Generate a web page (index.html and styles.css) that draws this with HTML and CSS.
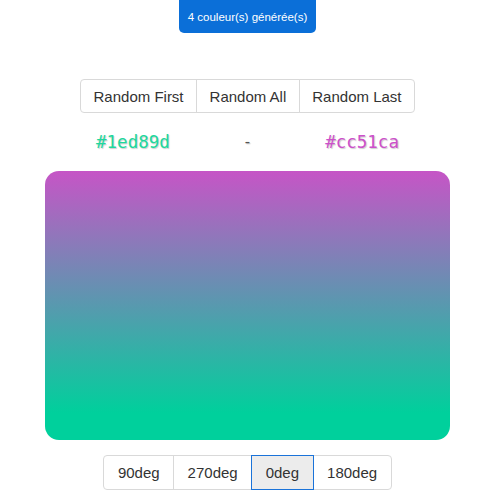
FILE: index.html
```html
<!DOCTYPE html>
<html lang="fr">
<head>
<meta charset="utf-8">
<link rel="stylesheet" href="styles.css">
</head>
<body>
<div class="page">
  <div class="badge">4 couleur(s) générée(s)</div>
  <div class="btn-group top-group">
    <button class="btn">Random First</button>
    <button class="btn">Random All</button>
    <button class="btn">Random Last</button>
  </div>
  <div class="colors">
    <span class="hex first">#1ed89d</span>
    <span class="dash">-</span>
    <span class="hex last">#cc51ca</span>
  </div>
  <div class="preview"></div>
  <div class="btn-group bottom-group">
    <button class="btn">90deg</button>
    <button class="btn">270deg</button>
    <button class="btn active">0deg</button>
    <button class="btn">180deg</button>
  </div>
</div>
</body>
</html>
```
FILE: styles.css
```css
html, body {
  margin: 0;
  padding: 0;
  background: #fff;
}
body {
  font-family: "Liberation Sans", Arial, sans-serif;
}
.page {
  width: 495px;
  display: flex;
  flex-direction: column;
  align-items: center;
}
.badge {
  background: #0b6fd8;
  color: #fff;
  font-size: 11.5px;
  height: 33px;
  box-sizing: border-box;
  padding: 10px 9px 0;
  border-radius: 0 0 5px 5px;
  line-height: 15px;
  white-space: nowrap;
}
.btn-group {
  display: flex;
}
.top-group {
  margin-top: 46px;
}
.btn {
  font-family: "Liberation Sans", Arial, sans-serif;
  font-size: 15px;
  color: #333;
  background: #fff;
  border: 1px solid #d9d9d9;
  margin-left: -1px;
  padding: 0 12.5px;
  height: 34px;
  cursor: pointer;
}
.btn:first-child {
  margin-left: 0;
  border-radius: 4px 0 0 4px;
}
.btn:last-child {
  border-radius: 0 4px 4px 0;
}
.btn.active {
  background: #ececec;
  border-color: #1a73d9;
  position: relative;
  z-index: 1;
}
.colors {
  width: 453px;
  display: flex;
  justify-content: space-evenly;
  align-items: center;
  margin-top: 15px;
  height: 28px;
  font-family: "DejaVu Sans Mono", monospace;
  font-size: 17.5px;
  text-shadow: 1px 1px 1px rgba(0, 0, 0, 0.2);
}
.first { color: #1ed89d; }
.last { color: #cc51ca; }
.dash {
  color: #555;
  font-family: "Liberation Sans", Arial, sans-serif;
  font-size: 16px;
}
.preview {
  margin-top: 15px;
  width: 405px;
  height: 269px;
  border-radius: 14px;
  background: linear-gradient(0deg, #00d09c 10%, #c655c6 100%);
}
.bottom-group {
  margin-top: 15px;
}
.bottom-group .btn {
  height: 35px;
  padding: 0 13.5px;
}
```
